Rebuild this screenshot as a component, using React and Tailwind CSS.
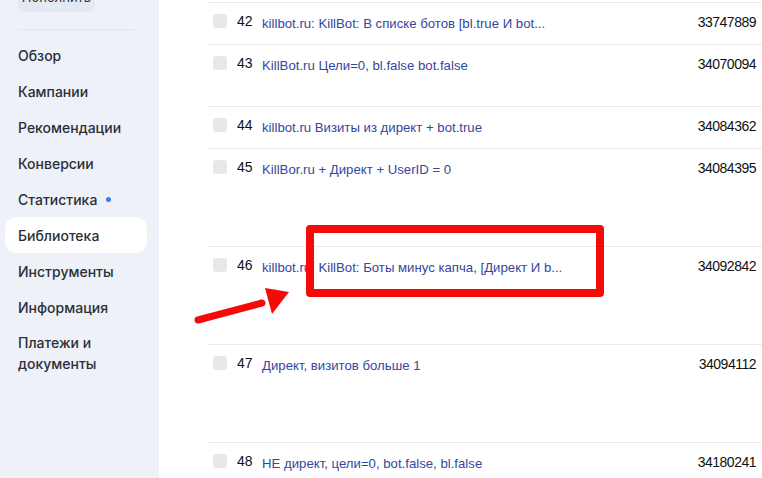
import React from "react";

const rows = [
  { n: 42, t: "killbot.ru: KillBot: В списке ботов [bl.true И bot...", id: "33747889", h: "h-[42px]" },
  { n: 43, t: "KillBot.ru Цели=0, bl.false bot.false", id: "34070094", h: "h-[62px]" },
  { n: 44, t: "killbot.ru Визиты из директ + bot.true", id: "34084362", h: "h-[42px]" },
  { n: 45, t: "KillBor.ru + Директ + UserID = 0", id: "34084395", h: "h-[98px]" },
  { n: 46, t: "killbot.ru: KillBot: Боты минус капча, [Директ И b...", id: "34092842", h: "h-[98px]" },
  { n: 47, t: "Директ, визитов больше 1", id: "34094112", h: "h-[98px]" },
  { n: 48, t: "НЕ директ, цели=0, bot.false, bl.false", id: "34180241", h: "h-[98px]" },
];

const nav = ["Обзор", "Кампании", "Рекомендации", "Конверсии", "Статистика", "Библиотека", "Инструменты", "Информация"];

export default function App() {
  return (
    <div className="relative w-[762px] h-[478px] overflow-hidden flex bg-white">
      <aside className="w-[159px] shrink-0 bg-[#eef1f7] flex flex-col" style={{ fontFamily: "Inter, 'Noto Sans', sans-serif" }}>
        <div className="px-[18px]">
          <div className="-mt-[16px] w-[77px] h-[28px] rounded-[8px] bg-[#e3e8f1] flex items-center justify-center text-[13px] text-[#333]">Пополнить</div>
          <div className="mt-[17px] h-px bg-[#e2e5ec] w-[117px]"></div>
        </div>
        <nav className="mt-[7px] flex flex-col pl-[5px] pr-[12px]">
          {nav.map((item) => (
            <div
              key={item}
              className={`h-[36px] flex items-center px-[13px] rounded-[12px] text-[14px] font-medium text-[#2b2f38] ${item === "Библиотека" ? "bg-white" : ""}`}
            >
              {item}
              {item === "Статистика" && <span className="ml-[9px] w-[5px] h-[5px] rounded-full bg-[#3d7bf2]"></span>}
            </div>
          ))}
          <div className="px-[13px] pt-[7px] text-[14px] font-medium text-[#2b2f38] leading-[21px]">
            Платежи и<br />документы
          </div>
        </nav>
      </aside>
      <main className="flex-1 pt-[2px] pl-[49px]" style={{ fontFamily: "'Liberation Sans', Arial, sans-serif" }}>
        {rows.map((r) => (
          <div key={r.n} className={`${r.h} shrink-0 border-t border-[#ebebeb] flex items-start pt-[10px]`}>
            <div className="ml-[5px] mt-[1px] w-[14px] h-[14px] rounded-[3px] bg-[#e8e8e8]"></div>
            <div className="ml-[10px] w-[25px] text-[14px] leading-[16px] text-[#111]">{r.n}</div>
            <div className="flex-1 mt-[2px] text-[13.2px] leading-[18px] text-[#34469d]">{r.t}</div>
            <div className="pr-[6px] mt-[1px] text-[14px] leading-[16px] tracking-[-0.5px] text-[#111]">{r.id}</div>
          </div>
        ))}
      </main>
      <div className="absolute left-[306px] top-[225px] w-[298px] h-[72px] border-[8px] border-[#f50a0a] rounded-[4px]"></div>
      <svg className="absolute left-0 top-0" width="762" height="478" viewBox="0 0 762 478">
        <line x1="198" y1="320" x2="262" y2="303" stroke="#f50a0a" strokeWidth="7" strokeLinecap="round" />
        <polygon points="289,292 265,288 272,314" fill="#f50a0a" />
      </svg>
    </div>
  );
}
